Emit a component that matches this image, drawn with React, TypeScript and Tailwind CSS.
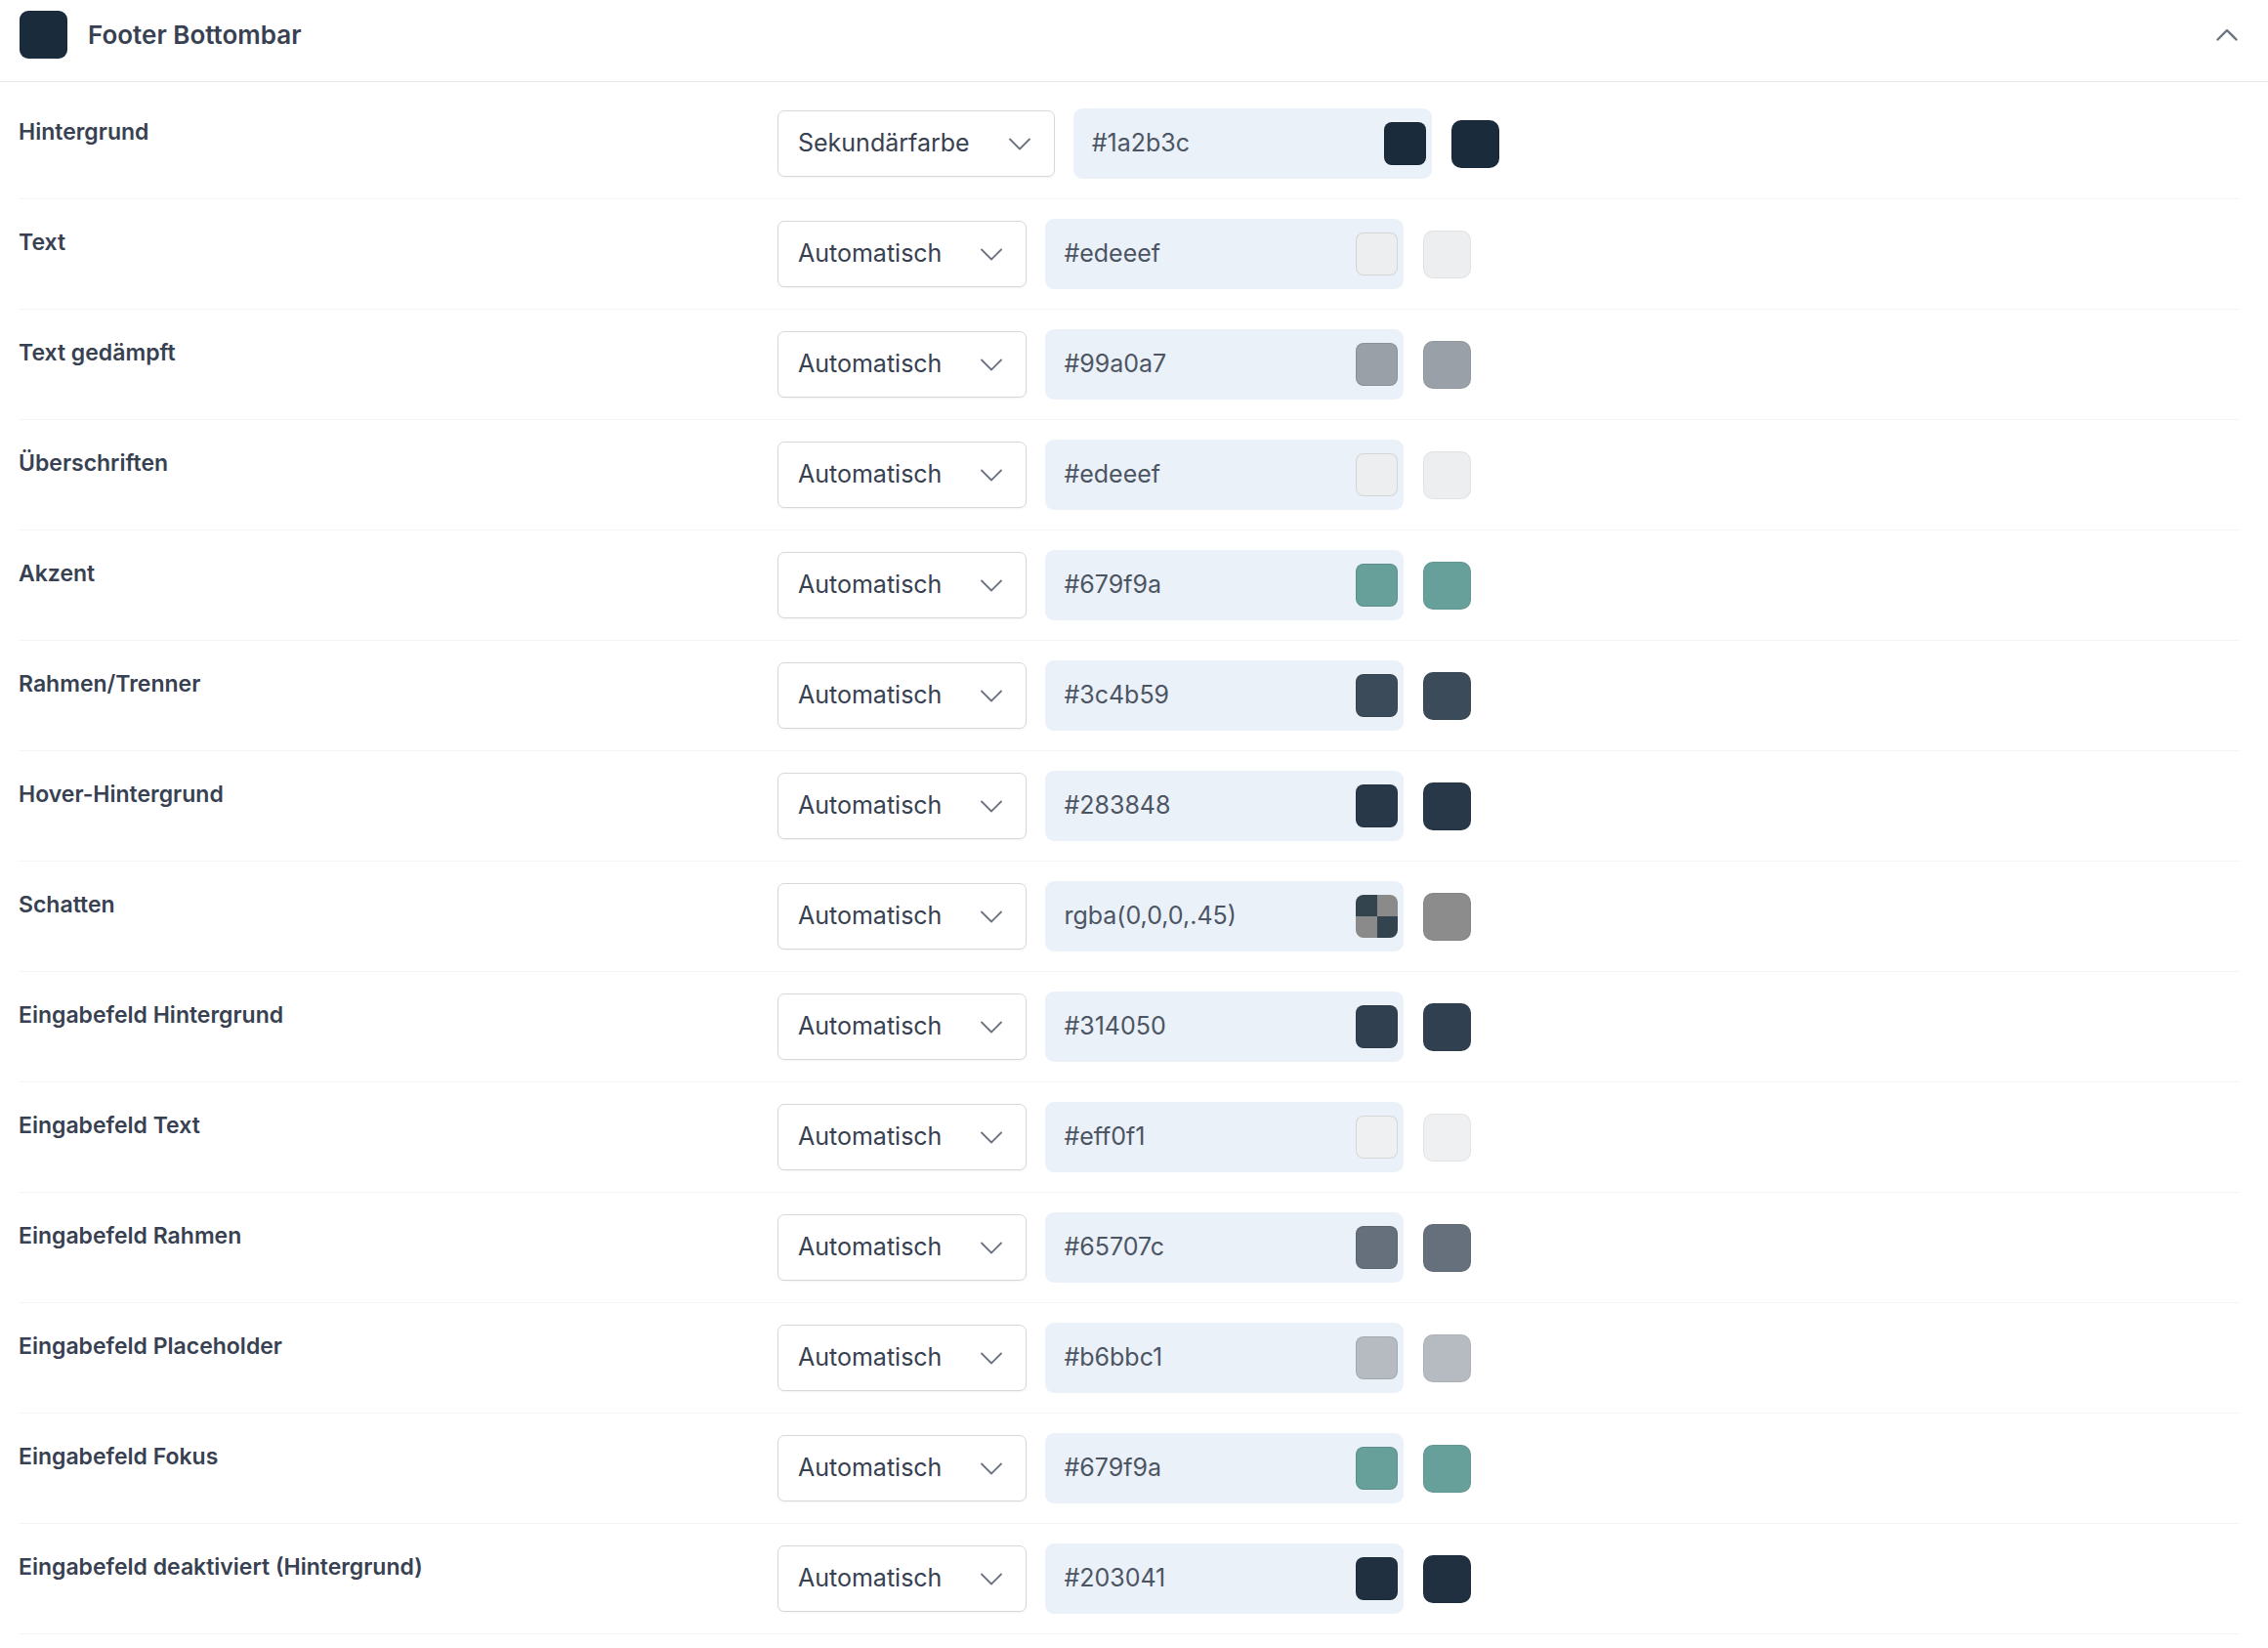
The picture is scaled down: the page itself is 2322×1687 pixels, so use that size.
const rows = [
  { label: "Hintergrund", mode: "Sekundärfarbe", value: "#1a2b3c", color: "#1a2b3c" },
  { label: "Text", mode: "Automatisch", value: "#edeeef", color: "#edeeef" },
  { label: "Text gedämpft", mode: "Automatisch", value: "#99a0a7", color: "#99a0a7" },
  { label: "Überschriften", mode: "Automatisch", value: "#edeeef", color: "#edeeef" },
  { label: "Akzent", mode: "Automatisch", value: "#679f9a", color: "#679f9a" },
  { label: "Rahmen/Trenner", mode: "Automatisch", value: "#3c4b59", color: "#3c4b59" },
  { label: "Hover-Hintergrund", mode: "Automatisch", value: "#283848", color: "#283848" },
  { label: "Schatten", mode: "Automatisch", value: "rgba(0,0,0,.45)", color: "#8c8c8c", checker: true },
  { label: "Eingabefeld Hintergrund", mode: "Automatisch", value: "#314050", color: "#314050" },
  { label: "Eingabefeld Text", mode: "Automatisch", value: "#eff0f1", color: "#eff0f1" },
  { label: "Eingabefeld Rahmen", mode: "Automatisch", value: "#65707c", color: "#65707c" },
  { label: "Eingabefeld Placeholder", mode: "Automatisch", value: "#b6bbc1", color: "#b6bbc1" },
  { label: "Eingabefeld Fokus", mode: "Automatisch", value: "#679f9a", color: "#679f9a" },
  { label: "Eingabefeld deaktiviert (Hintergrund)", mode: "Automatisch", value: "#203041", color: "#203041" },
];

function ChevronDown() {
  return (
    <svg width="22" height="13" viewBox="0 0 22 13" fill="none" className="ml-[40px] shrink-0">
      <path d="M1 1.5 L11 11.5 L21 1.5" stroke="#6b7280" strokeWidth="1.8" strokeLinecap="round" strokeLinejoin="round" />
    </svg>
  );
}

function ChevronUp() {
  return (
    <svg width="22" height="13" viewBox="0 0 22 13" fill="none">
      <path d="M1.5 11.5 L11 2 L20.5 11.5" stroke="#6b7280" strokeWidth="2.4" strokeLinecap="round" strokeLinejoin="round" />
    </svg>
  );
}

function Row({ label, mode, value, color, checker }: { label: string; mode: string; value: string; color: string; checker?: boolean }) {
  return (
    <div className="flex items-start py-[20px] border-b border-[#f1f3f5]">
      <div className="w-[777px] shrink-0 pt-[7px] text-[23px] leading-[1.5] font-semibold text-[#374151]">{label}</div>
      <div className="flex items-center h-[72px]">
        <div className="flex items-center h-[68px] pl-[20px] pr-[24px] bg-white border border-[#d4d7dc] rounded-[7px] shadow-[0_1px_2px_rgba(0,0,0,0.05)] text-[25px] text-[#374151]">
          <span>{mode}</span>
          <ChevronDown />
        </div>
        <div className="ml-[19px] flex items-center justify-between w-[367px] h-[72px] pl-[19px] pr-[6px] rounded-[9px] bg-[#ebf1f8] text-[25px] text-[#4b5563]">
          <span>{value}</span>
          {checker ? (
            <div className="grid grid-cols-2 grid-rows-2 w-[43px] h-[44px] rounded-[8px] overflow-hidden">
              <div className="bg-[#34444e]" />
              <div className="bg-[#8a8a8a]" />
              <div className="bg-[#8a8a8a]" />
              <div className="bg-[#34444e]" />
            </div>
          ) : (
            <div className="w-[43px] h-[44px] rounded-[8px] border border-black/10" style={{ backgroundColor: color }} />
          )}
        </div>
        <div className="ml-[20px] w-[49px] h-[49px] rounded-[10px] border border-black/5" style={{ backgroundColor: color }} />
      </div>
    </div>
  );
}

export default function App() {
  return (
    <div className="min-h-screen bg-white font-['Inter',sans-serif]">
      <div className="flex items-center justify-between pl-[20px] pr-[31px] pt-[11px] pb-[23px] border-b border-[#e5e7eb]">
        <div className="flex items-center">
          <div className="w-[49px] h-[49px] rounded-[9px] bg-[#1a2b3c]" />
          <h2 className="ml-[21px] text-[26px] font-semibold text-[#374151]">Footer Bottombar</h2>
        </div>
        <ChevronUp />
      </div>
      <div className="pl-[19px] pr-[29px] pt-[7px]">
        {rows.map((r) => (
          <Row key={r.label + r.value} {...r} />
        ))}
      </div>
    </div>
  );
}
